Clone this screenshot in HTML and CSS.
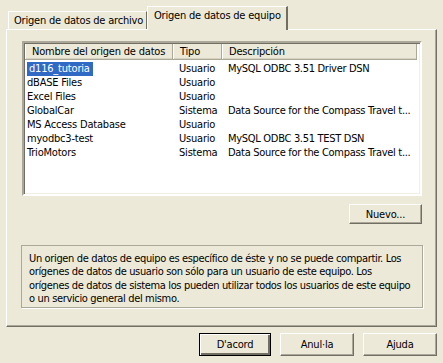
FILE: index.html
```html
<!DOCTYPE html>
<html lang="es">
<head>
    <meta charset="UTF-8">
    <title>Administrador de orígenes de datos ODBC</title>
    <link rel="stylesheet" href="styles.css">
</head>
<body>
    <div class="dialog">
        <div class="tabs">
            <div class="tab">Origen de datos de archivo</div>
            <div class="tab active">Origen de datos de equipo</div>
        </div>

        <div class="panel">
            <div class="listview">
                <div class="header">
                    <div class="col col-name">Nombre del origen de datos</div>
                    <div class="col col-type">Tipo</div>
                    <div class="col col-desc">Descripción</div>
                </div>
                <div class="rows">
                    <div class="row">
                        <div class="cell col-name"><span class="selected">d116_tutoria</span></div>
                        <div class="cell col-type">Usuario</div>
                        <div class="cell col-desc">MySQL ODBC 3.51 Driver DSN</div>
                    </div>
                    <div class="row">
                        <div class="cell col-name">dBASE Files</div>
                        <div class="cell col-type">Usuario</div>
                        <div class="cell col-desc"></div>
                    </div>
                    <div class="row">
                        <div class="cell col-name">Excel Files</div>
                        <div class="cell col-type">Usuario</div>
                        <div class="cell col-desc"></div>
                    </div>
                    <div class="row">
                        <div class="cell col-name">GlobalCar</div>
                        <div class="cell col-type">Sistema</div>
                        <div class="cell col-desc">Data Source for the Compass Travel t...</div>
                    </div>
                    <div class="row">
                        <div class="cell col-name">MS Access Database</div>
                        <div class="cell col-type">Usuario</div>
                        <div class="cell col-desc"></div>
                    </div>
                    <div class="row">
                        <div class="cell col-name">myodbc3-test</div>
                        <div class="cell col-type">Usuario</div>
                        <div class="cell col-desc">MySQL ODBC 3.51 TEST DSN</div>
                    </div>
                    <div class="row">
                        <div class="cell col-name">TrioMotors</div>
                        <div class="cell col-type">Sistema</div>
                        <div class="cell col-desc">Data Source for the Compass Travel t...</div>
                    </div>
                </div>
            </div>

            <div class="actions">
                <button class="btn">Nuevo...</button>
            </div>

            <div class="info">
                Un origen de datos de equipo es específico de éste y no se puede compartir. Los<br>
                orígenes de datos de usuario son sólo para un usuario de este equipo. Los<br>
                orígenes de datos de sistema los pueden utilizar todos los usuarios de este equipo<br>
                o un servicio general del mismo.
            </div>
        </div>

        <div class="footer">
            <button class="btn default">D'acord</button>
            <button class="btn">Anul·la</button>
            <button class="btn">Ajuda</button>
        </div>
    </div>
</body>
</html>
```

FILE: styles.css
```css
:root {
    --face: #ece9d8;
    --shadow: #aca899;
    --dark: #716f64;
    --light: #ffffff;
    --select: #316ac5;
}

* {
    box-sizing: border-box;
    margin: 0;
    padding: 0;
}

body {
    background: var(--face);
    color: #000;
    font-family: "DejaVu Sans Condensed", "DejaVu Sans", sans-serif;
    font-stretch: condensed;
    font-size: 11px;
    letter-spacing: -0.2px;
    width: 443px;
    height: 363px;
    overflow: hidden;
}

.dialog {
    padding: 6px 6px 0 6px;
    display: flex;
    flex-direction: column;
}

/* tab strip */
.tabs {
    display: flex;
    align-items: flex-end;
    height: 23px;
    padding-left: 2px;
    position: relative;
    z-index: 1;
}

.tab {
    height: 18px;
    width: 139px;
    padding-left: 5px;
    line-height: 17px;
    border-top: 1px solid var(--light);
    border-left: 1px solid var(--light);
    border-right: 1px solid var(--dark);
    white-space: nowrap;
}

.tab.active {
    height: 24px;
    width: 141px;
    margin-bottom: -1px;
    padding-left: 6px;
    line-height: 18px;
    background: var(--face);
    border-right: 2px solid var(--dark);
}

/* tab page */
.panel {
    height: 298px;
    border: 1px solid var(--light);
    border-right-color: var(--dark);
    border-bottom-color: var(--dark);
    box-shadow: inset -1px -1px 0 var(--shadow);
    padding: 11px 14px 0 15px;
    display: flex;
    flex-direction: column;
}

/* list view */
.listview {
    height: 155px;
    background: #fff;
    border: 2px solid;
    border-color: var(--shadow) var(--light) var(--light) var(--shadow);
    box-shadow: inset 1px 1px 0 var(--dark), inset -1px -1px 0 #f1efe2;
    padding: 1px 3px 0 1px;
}

.header {
    display: flex;
    height: 16px;
    background: var(--face);
    border-bottom: 1px solid var(--shadow);
    box-shadow: inset 0 -1px 0 #d6d2c2;
}

.header .col {
    line-height: 15px;
    padding-left: 6px;
    border-left: 1px solid var(--light);
    border-right: 1px solid var(--shadow);
    white-space: nowrap;
}

.col-name { width: 148px; }
.col-type { width: 49px; }
.col-desc { flex: 1; }

.rows {
    padding-top: 2px;
}

.row {
    display: flex;
    height: 14px;
    line-height: 13px;
}

.cell {
    padding-left: 6px;
    white-space: nowrap;
    overflow: hidden;
}

.row .col-name {
    padding-left: 2px;
}

.row .col-desc {
    letter-spacing: -0.3px;
}

.selected {
    display: inline-block;
    background: var(--select);
    color: #fff;
    padding: 0 3px 0 2px;
    height: 14px;
}

.actions {
    display: flex;
    justify-content: flex-end;
    padding-top: 8px;
}

/* buttons */
.btn {
    font: inherit;
    font-stretch: condensed;
    letter-spacing: -0.2px;
    color: #000;
    background: var(--face);
    width: 73px;
    height: 20px;
    border: 1px solid;
    border-color: var(--light) var(--dark) var(--dark) var(--light);
    box-shadow: inset -1px -1px 0 var(--shadow);
    cursor: default;
}

.btn.default {
    border: 1px solid #000;
    box-shadow: inset 1px 1px 0 var(--light), inset -2px -2px 0 var(--dark), inset -1px -1px 0 var(--shadow);
}

/* explanatory text */
.info {
    margin-top: 21px;
    width: 402px;
    margin-left: -1px;
    height: 63px;
    border: 1px solid var(--shadow);
    box-shadow: 1px 1px 0 var(--light);
    padding: 6px 6px 0 7px;
    line-height: 13.3px;
    letter-spacing: -0.35px;
    white-space: nowrap;
}

.footer {
    display: flex;
    justify-content: flex-end;
    gap: 9px;
    padding-top: 6px;
}

.footer .btn {
    width: 72px;
    height: 23px;
}

.footer .btn:nth-child(2),
.footer .btn:nth-child(3) {
    width: 74px;
}
```
